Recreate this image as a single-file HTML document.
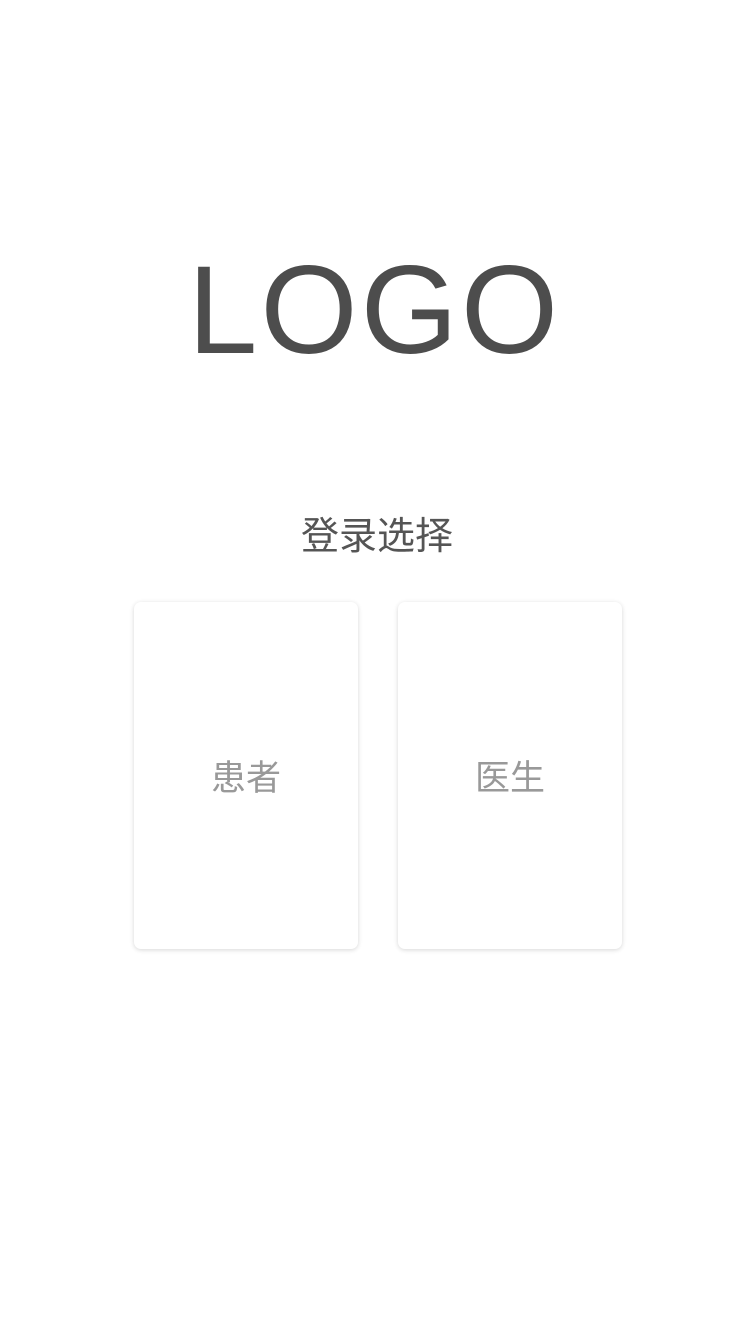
<!DOCTYPE html>
<html><head><meta charset="utf-8"><style>
html,body{margin:0;padding:0;background:#fff;width:750px;height:1334px;overflow:hidden;position:relative;font-family:"Liberation Sans","Noto Sans CJK SC",sans-serif}
.logo{position:absolute;left:0;width:750px;top:236px;text-align:center;font-size:125px;line-height:150px;color:#4d4d4d;letter-spacing:3px;text-indent:-1px}
.title{position:absolute;left:2px;width:750px;top:514px;text-align:center;font-size:38px;line-height:46px;color:#555}
.card{position:absolute;top:602px;width:224px;height:347px;border-radius:7px;background:#fff;box-shadow:0 1px 5px rgba(0,0,0,0.16);text-align:center;line-height:347px;font-size:35px;color:#999;font-family:"Noto Sans CJK SC",sans-serif}
</style></head><body>
<div class="logo">LOGO</div>
<div class="title">登录选择</div>
<div class="card" style="left:134px">患者</div>
<div class="card" style="left:398px">医生</div>
</body></html>
